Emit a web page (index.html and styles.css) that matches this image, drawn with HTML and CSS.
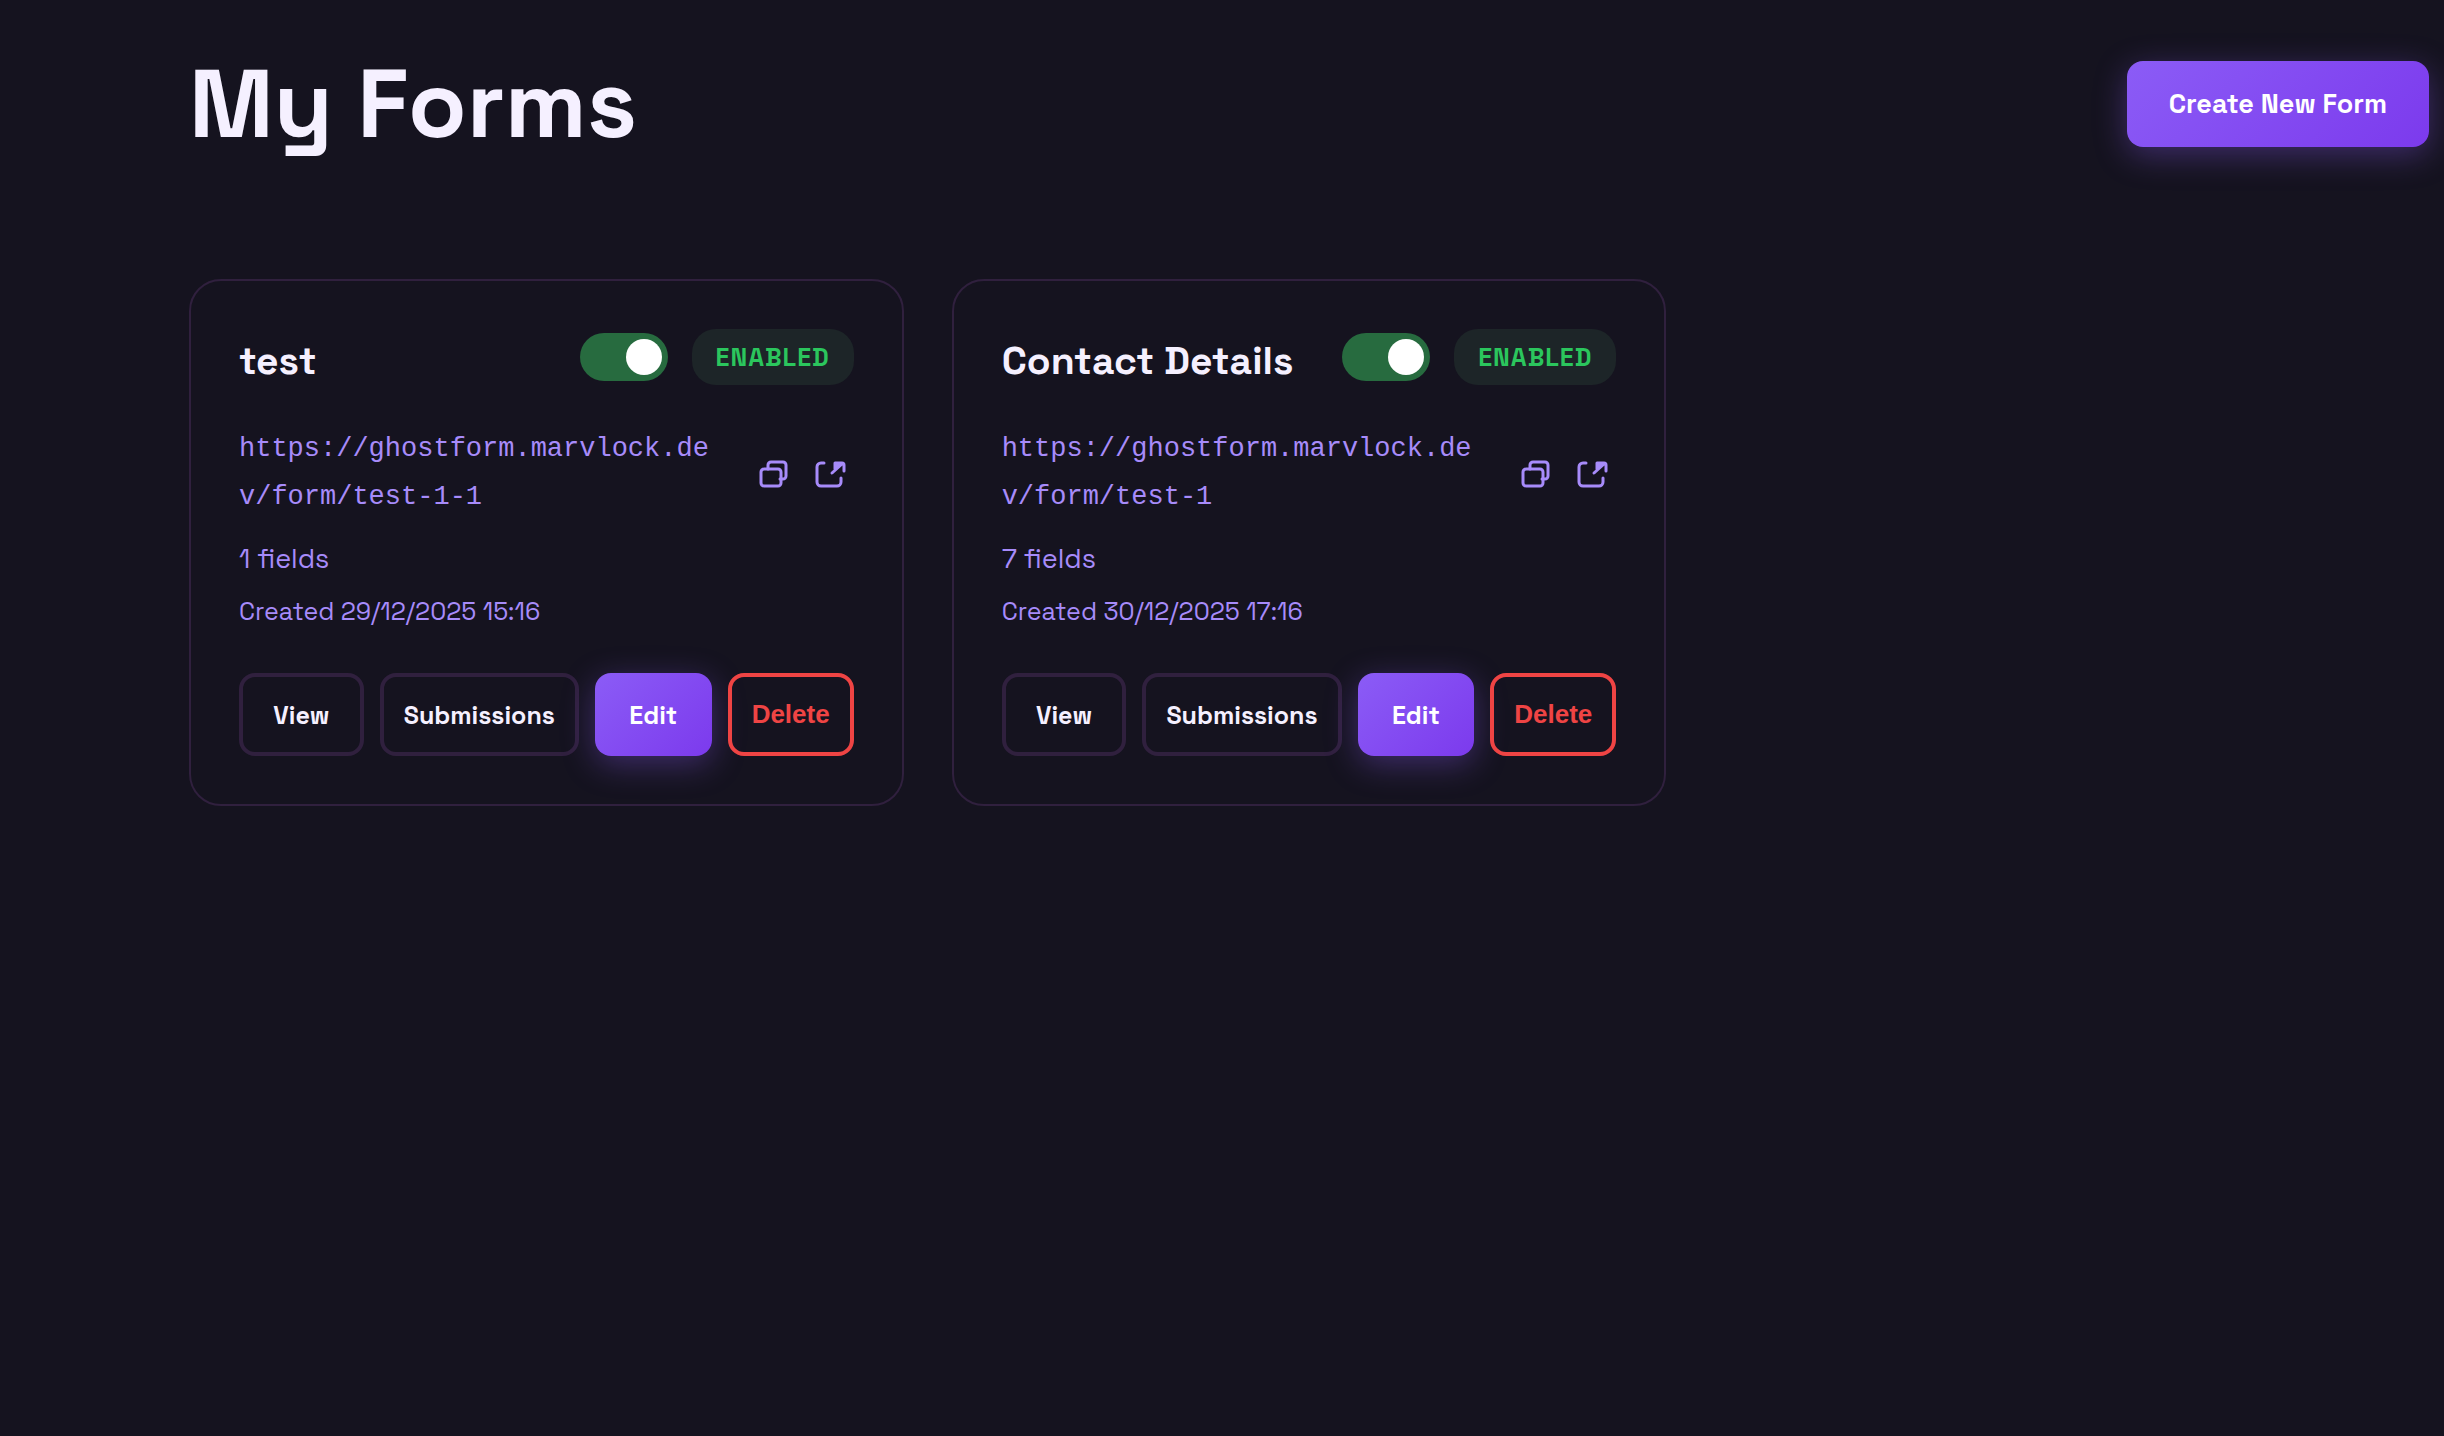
FILE: index.html
```html
<!DOCTYPE html>
<html lang="en">
<head>
    <meta charset="UTF-8"/>
    <meta name="viewport" content="width=device-width, initial-scale=1.0"/>
    <title>My Forms</title>
    <link rel="stylesheet" href="styles.css">
</head>

<body>
<!-- shared icons -->
<svg class="sprite" aria-hidden="true">
    <symbol id="icon-copy" viewBox="0 0 32 32">
        <rect x="3" y="12" width="20" height="17" rx="3"/>
        <path d="M10 12V8a3 3 0 0 1 3-3h12a3 3 0 0 1 3 3v11a3 3 0 0 1-3 3h-3"/>
    </symbol>
    <symbol id="icon-open" viewBox="0 0 32 32">
        <path d="M10 6H7a4 4 0 0 0-4 4v15a4 4 0 0 0 4 4h16a4 4 0 0 0 4-4v-4"/>
        <path d="M18 16L28 7M30 14V8a2 2 0 0 0-2-2h-7v6l2-3 3-2"/>
    </symbol>
</svg>

<div class="container">
    <header class="page-header">
        <h1>My Forms</h1>
        <a href="#" class="btn btn-primary btn-large">Create New Form</a>
    </header>

    <main class="forms-grid">
        <article class="form-card">
            <div class="card-header">
                <h2>test</h2>
                <div class="status">
                    <input type="checkbox" class="toggle" aria-label="Enable test" checked/>
                    <span class="badge">ENABLED</span>
                </div>
            </div>
            <div class="form-url">
                <code>https://ghostform.marvlock.dev/form/test-1-1</code>
                <button class="icon-btn" aria-label="Copy link"><svg><use href="#icon-copy"/></svg></button>
                <a href="#" class="icon-btn" aria-label="Open form"><svg><use href="#icon-open"/></svg></a>
            </div>
            <p class="fields">1 fields</p>
            <p class="created">Created 29/12/2025 15:16</p>
            <div class="actions">
                <a href="#" class="btn btn-secondary">View</a>
                <a href="#" class="btn btn-secondary">Submissions</a>
                <a href="#" class="btn btn-primary">Edit</a>
                <button class="btn btn-danger">Delete</button>
            </div>
        </article>

        <article class="form-card">
            <div class="card-header">
                <h2>Contact Details</h2>
                <div class="status">
                    <input type="checkbox" class="toggle" aria-label="Enable Contact Details" checked/>
                    <span class="badge">ENABLED</span>
                </div>
            </div>
            <div class="form-url">
                <code>https://ghostform.marvlock.dev/form/test-1</code>
                <button class="icon-btn" aria-label="Copy link"><svg><use href="#icon-copy"/></svg></button>
                <a href="#" class="icon-btn" aria-label="Open form"><svg><use href="#icon-open"/></svg></a>
            </div>
            <p class="fields">7 fields</p>
            <p class="created">Created 30/12/2025 17:16</p>
            <div class="actions">
                <a href="#" class="btn btn-secondary">View</a>
                <a href="#" class="btn btn-secondary">Submissions</a>
                <a href="#" class="btn btn-primary">Edit</a>
                <button class="btn btn-danger">Delete</button>
            </div>
        </article>
    </main>
</div>
</body>
</html>
```
FILE: styles.css
```css
* {
    box-sizing: border-box;
    margin: 0;
    padding: 0;
}

body {
    background: #15131f;
    color: #f5f0ff;
    font-family: "Space Grotesk", Inter, sans-serif;
    font-size: 25px;
    line-height: 40px;
}

.sprite {
    display: none;
}

.container {
    padding: 44px 15px 48px 189px;
}

.page-header {
    display: flex;
    justify-content: space-between;
    align-items: center;
    margin-bottom: 115px;
}

h1 {
    font-size: 96px;
    font-weight: 700;
    line-height: 120px;
}

.forms-grid {
    display: grid;
    grid-template-columns: repeat(3, 1fr);
    gap: 48px;
}

.form-card {
    min-width: 0;
    padding: 48px;
    border: 2px solid #30203e;
    border-radius: 32px;
}

.card-header {
    display: flex;
    justify-content: space-between;
    align-items: flex-start;
    margin-bottom: 40px;
}

h2 {
    padding-top: 8px;
    font-size: 39px;
    font-weight: 600;
    line-height: 48px;
}

.status {
    display: flex;
    align-items: center;
    gap: 24px;
}

.toggle {
    appearance: none;
    display: flex;
    justify-content: flex-end;
    width: 88px;
    height: 48px;
    padding: 6px;
    border-radius: 24px;
    background: #276b3f;
}

.toggle::before {
    content: "";
    width: 36px;
    height: 36px;
    border-radius: 50%;
    background: #fff;
}

.badge {
    padding: 8px 24px;
    border-radius: 24px;
    background: #1d2528;
    color: #2bc65d;
    font-weight: 600;
    letter-spacing: 1px;
}

.form-url {
    display: flex;
    align-items: center;
    gap: 8px;
    margin-bottom: 18px;
    color: #a78bfa;
}

code {
    flex: 1;
    margin-right: 16px;
    font-family: "Liberation Mono", monospace;
    font-size: 27px;
    line-height: 48px;
    word-break: break-all;
}

.icon-btn {
    display: flex;
    padding: 8px;
    border: none;
    background: none;
    color: inherit;
}

.icon-btn svg {
    width: 32px;
    height: 32px;
    fill: none;
    stroke: currentColor;
    stroke-width: 3;
    stroke-linecap: round;
    stroke-linejoin: round;
}

.fields,
.created {
    color: #a78bfa;
}

.fields {
    margin-bottom: 12px;
    font-size: 27px;
}

.created {
    margin-bottom: 42px;
}

.actions {
    display: flex;
    gap: 16px;
}

.btn {
    display: flex;
    justify-content: center;
    align-items: center;
    height: 83px;
    padding: 0 20px;
    border: 4px solid transparent;
    border-radius: 16px;
    background: none;
    font-size: 25px;
    font-weight: 600;
    color: #f5f0ff;
    text-decoration: none;
    white-space: nowrap;
}

.actions .btn {
    flex: 1;
}

.btn-primary {
    border: none;
    background: linear-gradient(135deg, #8b5cf6, #7c3aed);
    box-shadow: 0 8px 32px rgba(139, 92, 246, 0.35);
    color: #fff;
}

.btn-secondary {
    border-color: #30203e;
}

.btn-danger {
    border-color: #ef4444;
    color: #ef4444;
    font-family: "Liberation Sans", Arial, sans-serif;
    font-size: 26px;
}

.btn-large {
    height: 86px;
    padding: 0 42px;
    font-size: 27px;
}
```
